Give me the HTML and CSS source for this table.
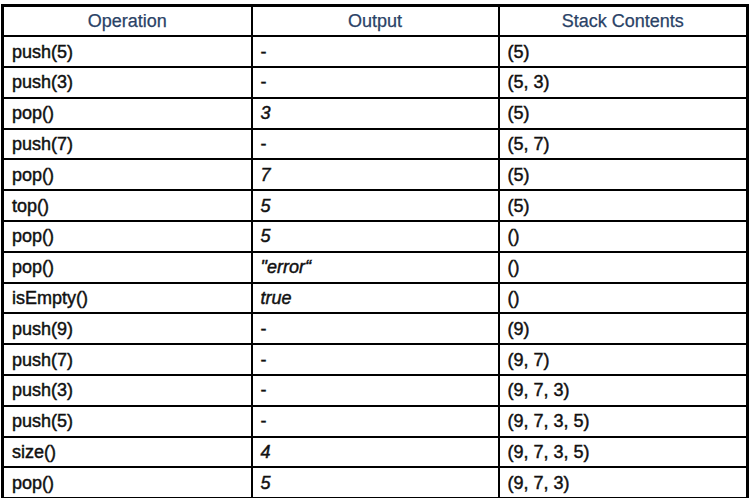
FILE: index.html
```html
<!DOCTYPE html>
<html>
<head>
<meta charset="utf-8">
<link rel="stylesheet" href="styles.css">
</head>
<body>
<table class="ops">
  <colgroup><col class="c1"><col class="c2"><col class="c3"></colgroup>
  <thead>
    <tr><th>Operation</th><th>Output</th><th>Stack Contents</th></tr>
  </thead>
  <tbody>
    <tr><td>push(5)</td><td>-</td><td>(5)</td></tr>
    <tr><td>push(3)</td><td>-</td><td>(5, 3)</td></tr>
    <tr><td>pop()</td><td class="out">3</td><td>(5)</td></tr>
    <tr><td>push(7)</td><td>-</td><td>(5, 7)</td></tr>
    <tr><td>pop()</td><td class="out">7</td><td>(5)</td></tr>
    <tr><td>top()</td><td class="out">5</td><td>(5)</td></tr>
    <tr><td>pop()</td><td class="out">5</td><td>()</td></tr>
    <tr><td>pop()</td><td class="out">"error“</td><td>()</td></tr>
    <tr><td>isEmpty()</td><td class="out">true</td><td>()</td></tr>
    <tr><td>push(9)</td><td>-</td><td>(9)</td></tr>
    <tr><td>push(7)</td><td>-</td><td>(9, 7)</td></tr>
    <tr><td>push(3)</td><td>-</td><td>(9, 7, 3)</td></tr>
    <tr><td>push(5)</td><td>-</td><td>(9, 7, 3, 5)</td></tr>
    <tr><td>size()</td><td class="out">4</td><td>(9, 7, 3, 5)</td></tr>
    <tr><td>pop()</td><td class="out">5</td><td>(9, 7, 3)</td></tr>
  </tbody>
</table>
</body>
</html>
```

FILE: styles.css
```css
html, body {
  margin: 0;
  padding: 0;
  background: #ffffff;
}
body {
  padding: 4px 0 0 1px;
  font-family: "Liberation Sans", Arial, sans-serif;
  color: #111;
}
.ops {
  width: 748px;
  table-layout: fixed;
  border-collapse: collapse;
  border: 3px solid #000;
}
.ops col.c1 { width: 249px; }
.ops col.c2 { width: 247px; }
.ops col.c3 { width: 249px; }
.ops tr { height: 30.8px; }
.ops th, .ops td {
  border: 2px solid #000;
  padding: 0 8px;
  font-size: 18px;
  line-height: 20px;
  vertical-align: middle;
  white-space: nowrap;
}
.ops th {
  font-weight: normal;
  font-size: 18px;
  color: #2a4266;
  text-align: center;
  -webkit-text-stroke: 0.25px #2a4266;
}
.ops td {
  font-weight: normal;
  text-align: left;
  -webkit-text-stroke: 0.45px #111;
}
.ops td.out {
  font-style: italic;
}
```
